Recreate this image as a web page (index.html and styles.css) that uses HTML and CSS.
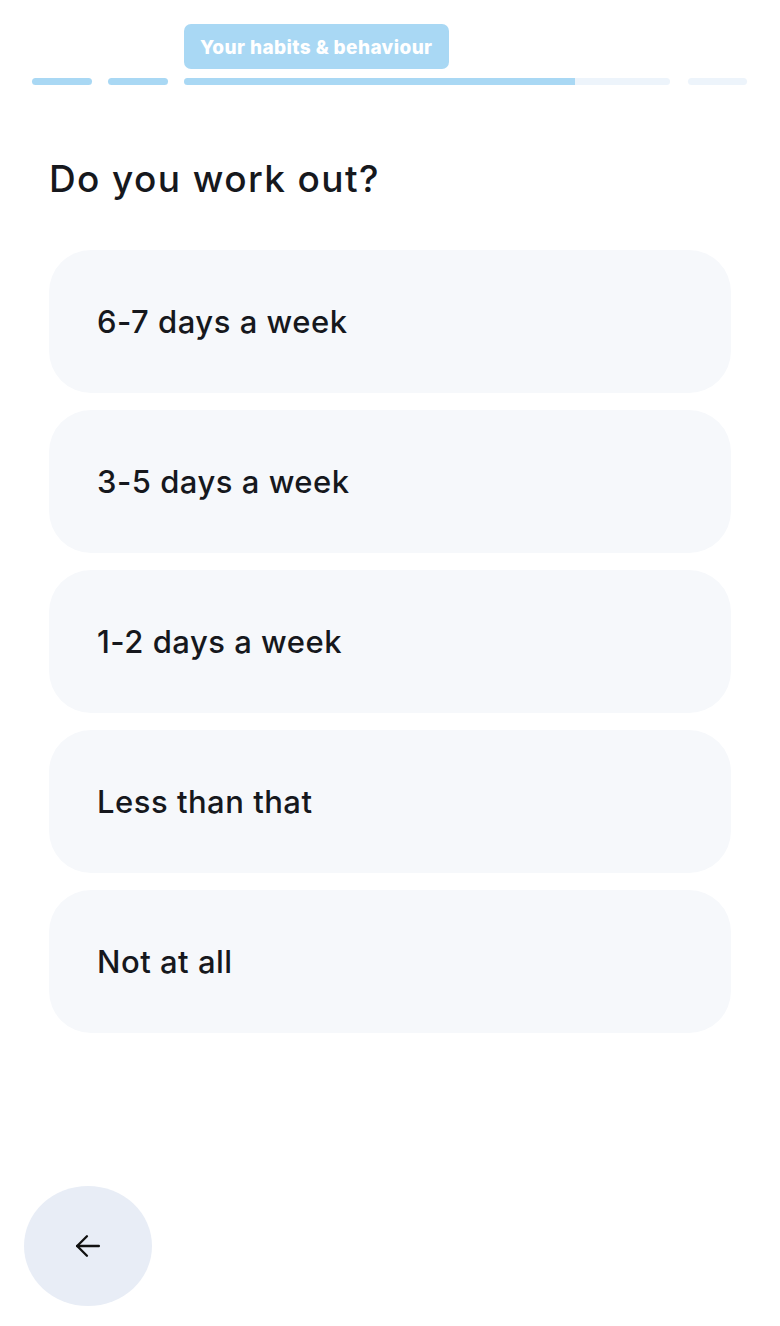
FILE: index.html
```html
<!DOCTYPE html>
<html lang="en">
<head>
    <meta charset="UTF-8">
    <meta name="viewport" content="width=device-width, initial-scale=1.0">
    <title>Do you work out?</title>
    <link rel="stylesheet" href="styles.css">
</head>
<body>
    <div class="progress">
        <div class="step done"></div>
        <div class="step done"></div>
        <div class="step-current">
            <span class="step-label">Your habits &amp; behaviour</span>
            <div class="step">
                <div class="step-fill" style="width: 80.5%"></div>
            </div>
        </div>
        <div class="step last"></div>
    </div>

    <div class="question">
        <h1>Do you work out?</h1>
        <div class="options">
            <button class="option">6-7 days a week</button>
            <button class="option">3-5 days a week</button>
            <button class="option">1-2 days a week</button>
            <button class="option">Less than that</button>
            <button class="option">Not at all</button>
        </div>
    </div>

    <div class="footer">
        <button class="back" aria-label="Back">
            <svg width="26" height="26" viewBox="0 0 24 24" fill="none" stroke="#111" stroke-width="2.2" stroke-linecap="round" stroke-linejoin="round">
                <path d="M22 12H2"/>
                <path d="M11 3l-9 9 9 9"/>
            </svg>
        </button>
    </div>
</body>
</html>
```

FILE: styles.css
```css
body {
    font-family: Inter, "Open Sans", sans-serif;
    background-color: #fff;
    color: #16181d;
    margin: 0;
    padding: 0;
    height: 1326px;
    display: flex;
    flex-direction: column;
}

.progress {
    display: flex;
    align-items: flex-end;
    gap: 16px;
    padding: 24px 0 0 32px;
}

.step {
    width: 60px;
    height: 7px;
    border-radius: 4px;
    background-color: #edf4fb;
    overflow: hidden;
}

.step.done {
    background-color: #a9d8f4;
}

.step.last {
    width: 59px;
    margin-left: 2px;
}

.step-current {
    display: flex;
    flex-direction: column;
    align-items: flex-start;
    gap: 9px;
}

.step-current .step {
    width: 486px;
}

.step-fill {
    height: 100%;
    background-color: #a9d8f4;
}

.step-label {
    background-color: #a9d8f4;
    color: #fff;
    font-weight: 800;
    font-size: 19px;
    line-height: 43px;
    padding: 2px 16px 0;
    border-radius: 7px;
    letter-spacing: 0.4px;
}

.question {
    padding: 0 49px;
}

h1 {
    font-size: 37px;
    font-weight: 500;
    margin: 69px 0 46px;
    line-height: 50px;
    letter-spacing: 1.4px;
}

.options {
    display: flex;
    flex-direction: column;
    gap: 17px;
}

.option {
    height: 143px;
    border: none;
    border-radius: 42px;
    background-color: #f6f8fb;
    text-align: left;
    padding: 0 48px;
    font-family: inherit;
    font-size: 31px;
    font-weight: 500;
    letter-spacing: 0.5px;
    color: #16181d;
    cursor: pointer;
}

.footer {
    margin-top: auto;
    padding: 0 0 20px 24px;
}

.back {
    width: 128px;
    height: 120px;
    border: none;
    border-radius: 50%;
    background-color: #e8edf6;
    display: flex;
    align-items: center;
    justify-content: center;
    cursor: pointer;
}
```
